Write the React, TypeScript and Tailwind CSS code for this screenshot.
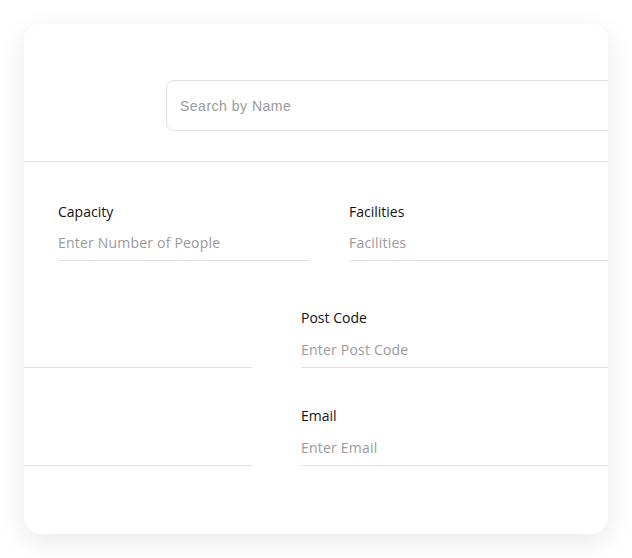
import React from 'react';

type Field = {
    label: string;
    placeholder: string;
};

const UnderlineField = ({ label, placeholder, className, tall }: Field & { className?: string; tall?: boolean }) => (
    <div className={className}>
        <label className="block text-[14px] leading-5 font-medium text-[#111]">{label}</label>
        <input
            className={`mt-[3px] block w-full ${tall ? 'h-[37px]' : 'h-9'} border-b border-[#e2e2e2] bg-transparent text-[14px] tracking-[0.2px] text-[#333] outline-none placeholder:text-[#9a9a9a]`}
            placeholder={placeholder}
        />
    </div>
);

const App = () => {
    return (
        <div className="min-h-[558px] bg-white p-6 font-['Open_Sans',sans-serif]">
            <div className="relative h-[510px] overflow-hidden rounded-2xl bg-white shadow-[0_8px_28px_rgba(0,0,0,0.09)]">
                {/* Search */}
                <div className="pt-14 pb-[30px] pl-[142px] border-b border-[#e2e2e2]">
                    <input
                        className="block w-[520px] h-[51px] rounded-lg border border-[#e2e2e2] px-[13px] text-[14px] tracking-[0.5px] font-['Liberation_Sans',sans-serif] outline-none placeholder:text-[#9a9a9a]"
                        placeholder="Search by Name"
                    />
                </div>

                {/* Capacity / Facilities */}
                <div className="mt-10 flex gap-[39px] pl-[34px]">
                    <UnderlineField className="w-[252px] shrink-0" label="Capacity" placeholder="Enter Number of People" />
                    <UnderlineField className="w-[300px] shrink-0" label="Facilities" placeholder="Facilities" />
                </div>

                {/* Post Code */}
                <div className="mt-[47px] flex items-end gap-[49px]">
                    <div className="w-[228px] shrink-0 border-b border-[#e2e2e2]"></div>
                    <UnderlineField tall className="w-[340px] shrink-0" label="Post Code" placeholder="Enter Post Code" />
                </div>

                {/* Email */}
                <div className="mt-[38px] flex items-end gap-[49px]">
                    <div className="w-[228px] shrink-0 border-b border-[#e2e2e2]"></div>
                    <UnderlineField tall className="w-[340px] shrink-0" label="Email" placeholder="Enter Email" />
                </div>
            </div>
        </div>
    );
};

export default App;
